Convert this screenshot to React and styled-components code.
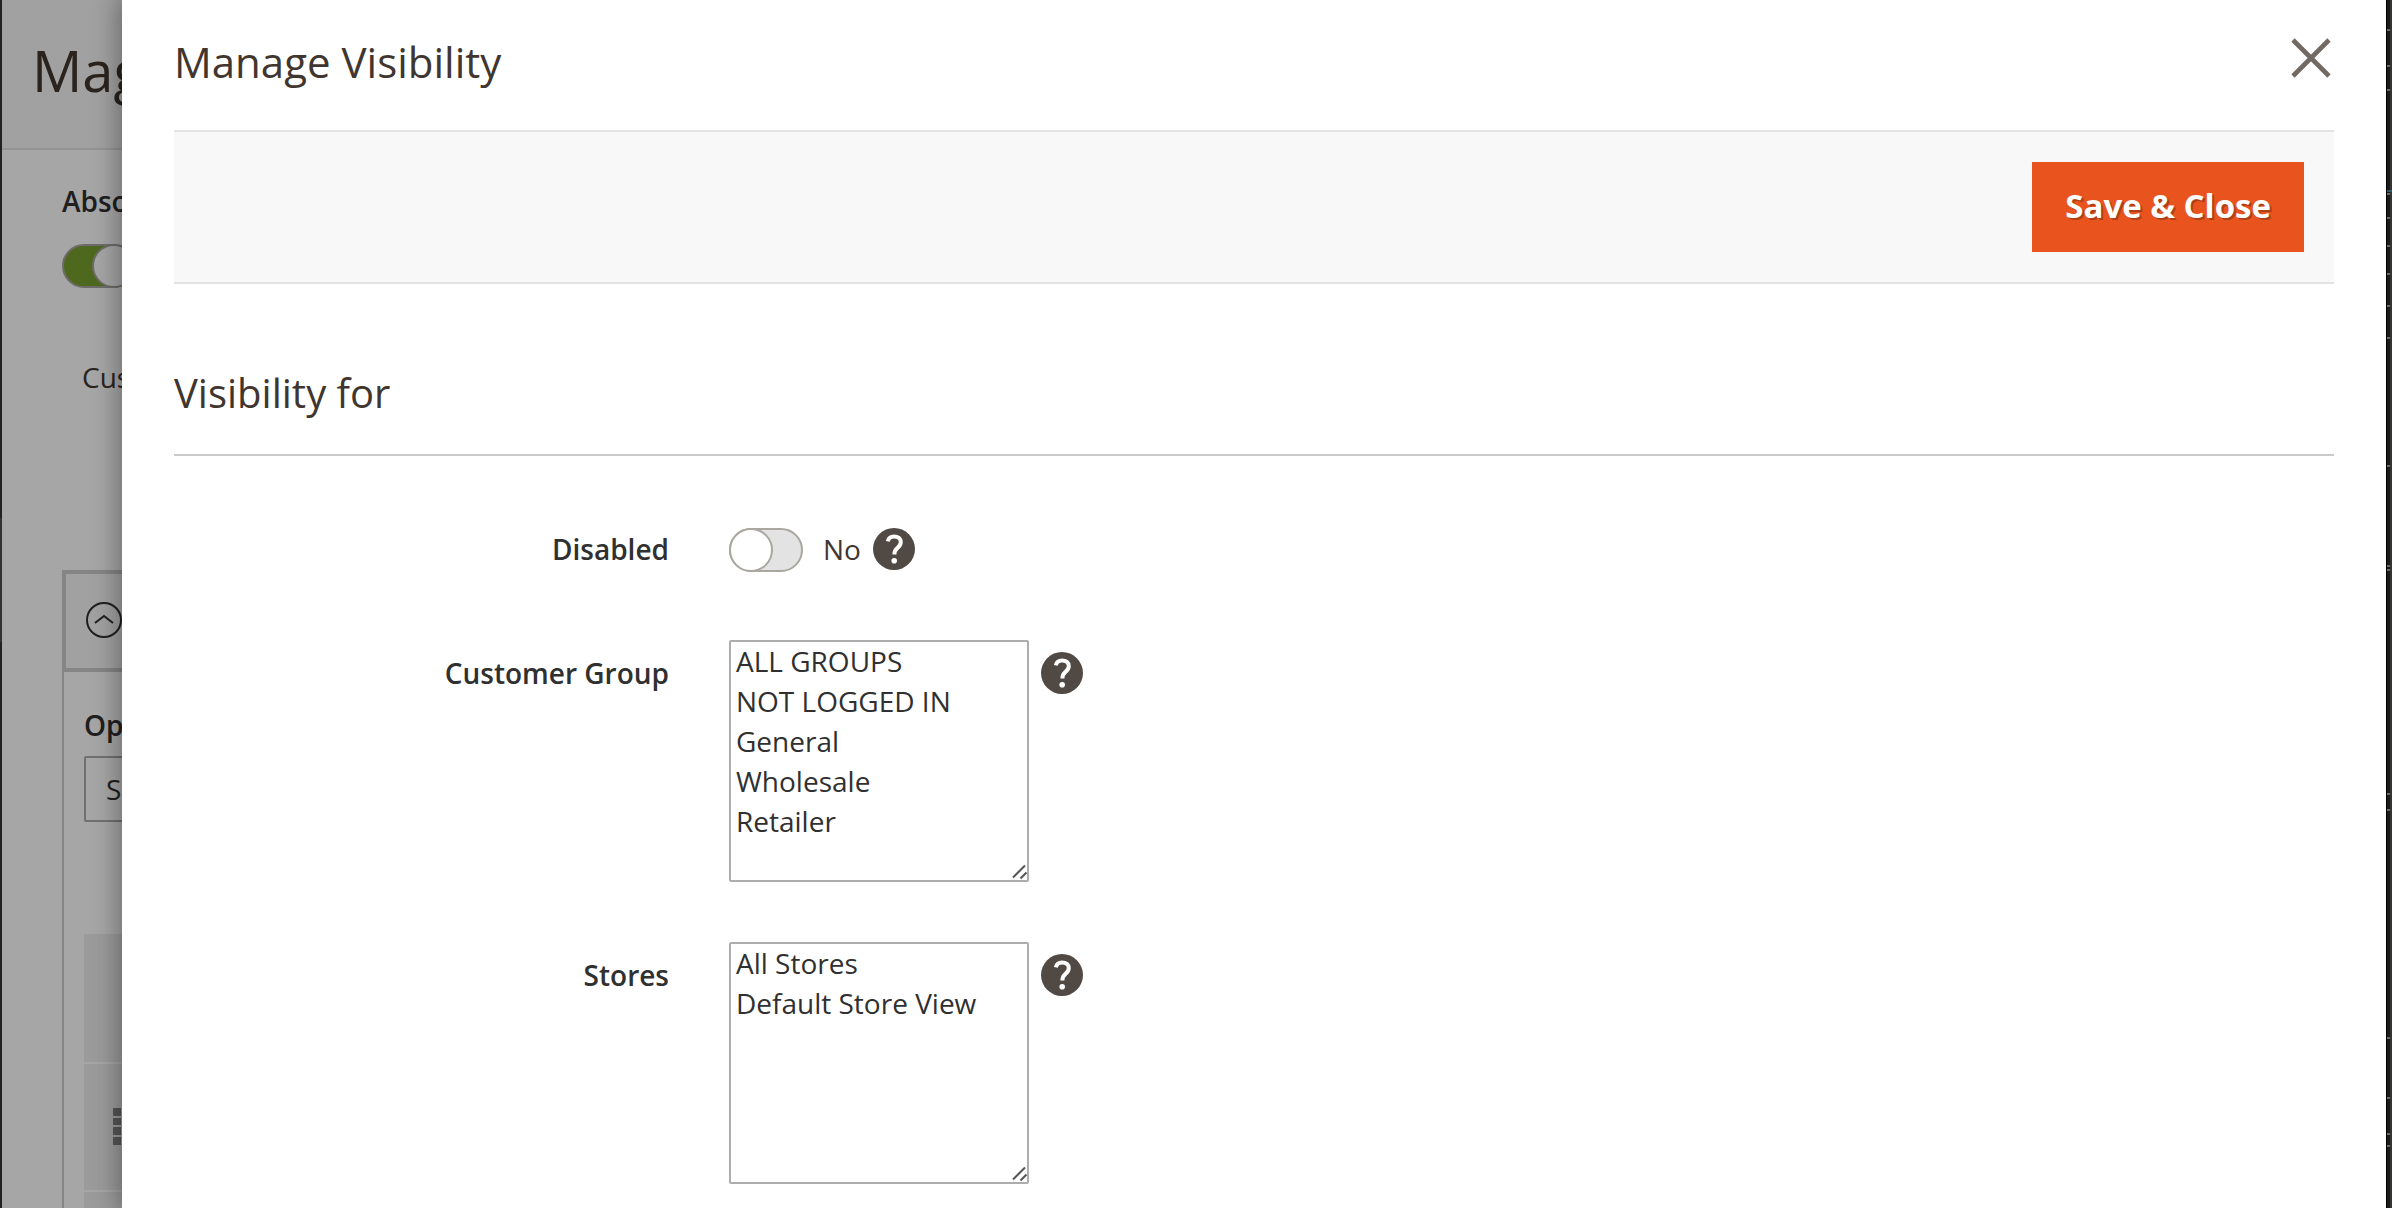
import { useState } from 'react';
import styled, { createGlobalStyle } from 'styled-components';

const customerGroups = ['ALL GROUPS', 'NOT LOGGED IN', 'General', 'Wholesale', 'Retailer'];
const stores = ['All Stores', 'Default Store View'];

const editorMarks = [30, 66, 90, 194, 218, 246, 274, 306, 338, 466, 566, 570, 794, 810, 1038, 1098, 1134, 1146];

function HelpButton({ topic }) {
  return (
    <Help type='button' aria-label={`Help: ${topic}`}>
      <svg viewBox='0 0 42 42' width='42' height='42' aria-hidden='true'>
        <circle cx='21' cy='21' r='21' fill='#514943' />
        <path
          d='M14.8 13.4c.6-3.3 3-5 6.3-5 3.8 0 6.7 2.1 6.7 5.7 0 2.6-1.3 4.2-3.3 5.8-2.1 1.7-3.1 2.8-3.1 6.6'
          fill='none'
          stroke='#fff'
          strokeWidth='4'
        />
        <circle cx='21.2' cy='32.7' r='2.8' fill='#fff' />
      </svg>
    </Help>
  );
}

function MultiSelectField({ id, label, options }) {
  return (
    <Field>
      <FieldLabel htmlFor={id} $offset>
        {label}
      </FieldLabel>
      <Control>
        <SelectWrap>
          <MultiSelect id={id} multiple size={5}>
            {options.map((option) => (
              <option key={option}>{option}</option>
            ))}
          </MultiSelect>
          <Grip viewBox='0 0 16 16' width='16' height='16' aria-hidden='true'>
            <path d='M1 13.5L13 1.5M8.5 14.5l6-6' fill='none' stroke='#555' strokeWidth='2' />
          </Grip>
        </SelectWrap>
        <HelpOffset>
          <HelpButton topic={label} />
        </HelpOffset>
      </Control>
    </Field>
  );
}

function PageBehind() {
  return (
    <Page>
      <PageHeader>
        <PageTitle>Mag</PageTitle>
      </PageHeader>
      <PageBody>
        <PageLabel htmlFor='absolute'>Abso</PageLabel>
        <PageSwitch>
          <Switch id='absolute' type='checkbox' defaultChecked />
        </PageSwitch>
        <PageText>Cus</PageText>
        <Panel>
          <PanelHeader>
            <svg viewBox='0 0 36 36' width='36' height='36' aria-hidden='true'>
              <circle cx='18' cy='18' r='17' fill='none' stroke='#303030' strokeWidth='2' />
              <path d='M9 21l9-7 9 7' fill='none' stroke='#303030' strokeWidth='2' />
            </svg>
          </PanelHeader>
          <PanelBody>
            <PageLabel htmlFor='option'>Op</PageLabel>
            <OptionSelect id='option'>
              <option>S</option>
            </OptionSelect>
            <Rows>
              <OptionRow />
              <OptionRow>
                <svg viewBox='0 0 18 38' width='18' height='38' aria-hidden='true'>
                  <path
                    d='M0 0h8v8H0zM0 10h8v7H0zM0 19h8v8H0zM0 29h8v8H0zM10 0h8v8h-8zM10 10h8v7h-8zM10 19h8v8h-8zM10 29h8v8h-8z'
                    fill='#858585'
                  />
                </svg>
              </OptionRow>
              <OptionRow />
            </Rows>
          </PanelBody>
        </Panel>
      </PageBody>
    </Page>
  );
}

export default function App() {
  const [disabled, setDisabled] = useState(false);

  return (
    <>
      <GlobalStyle />
      <Screen>
        <Admin>
          <Menu>
            <MenuItem />
          </Menu>
          <PageBehind />
          <Overlay />
          <Modal role='dialog' aria-labelledby='modal-title'>
            <ModalHeader>
              <ModalTitle id='modal-title'>Manage Visibility</ModalTitle>
              <Close type='button' aria-label='Close'>
                <svg viewBox='0 0 44 44' width='44' height='44' aria-hidden='true'>
                  <path d='M3 4L39 40M39 4L3 40' stroke='#736963' strokeWidth='4.6' />
                </svg>
              </Close>
            </ModalHeader>
            <Toolbar>
              <SaveButton type='button'>Save &amp; Close</SaveButton>
            </Toolbar>
            <SectionTitle>Visibility for</SectionTitle>
            <Form>
              <Field>
                <FieldLabel htmlFor='disabled'>Disabled</FieldLabel>
                <Control>
                  <Switch
                    id='disabled'
                    type='checkbox'
                    checked={disabled}
                    onChange={(e) => setDisabled(e.target.checked)}
                  />
                  <SwitchText>{disabled ? 'Yes' : 'No'}</SwitchText>
                  <HelpButton topic='Disabled' />
                </Control>
              </Field>
              <MultiSelectField id='customer-group' label='Customer Group' options={customerGroups} />
              <MultiSelectField id='stores' label='Stores' options={stores} />
            </Form>
          </Modal>
        </Admin>
        <EditorEdge>
          <svg width='6' height='1208' aria-hidden='true'>
            {editorMarks.map((y) => (
              <rect key={y} x='1' y={y - 1} width='3' height='2' fill='#6b6b66' />
            ))}
            <rect x='1' y='190' width='5' height='2' fill='#2c5c69' />
          </svg>
        </EditorEdge>
      </Screen>
    </>
  );
}

const GlobalStyle = createGlobalStyle`
  *, *::before {
    box-sizing: border-box;
  }
  body {
    margin: 0;
    color: #303030;
    font-family: 'Open Sans', 'Noto Sans', sans-serif;
    font-size: 28px;
    line-height: 42px;
  }
  button, input, select {
    margin: 0;
    color: inherit;
    font: inherit;
  }
  svg {
    display: block;
  }
`;
const Screen = styled.div`
  display: flex;
  height: 100vh;
  overflow: hidden;
`;
const Admin = styled.div`
  position: relative;
  display: flex;
  flex: 1;
  min-width: 0;
  overflow: hidden;
`;
const Menu = styled.nav`
  width: 2px;
  padding-top: 518px;
  background: #373330;
`;
const MenuItem = styled.div`
  height: 124px;
  background: #524d49;
`;
const Page = styled.div`
  flex: 1;
  background: #fff;
`;
const PageHeader = styled.header`
  height: 150px;
  padding: 32px 30px;
  background: #f8f8f8;
  border-bottom: 2px solid #e3e3e3;
`;
const PageTitle = styled.h1`
  margin: 0;
  color: #41362f;
  font-size: 56px;
  font-weight: 400;
  line-height: 76px;
`;
const PageBody = styled.main`
  padding: 30px 60px;
`;
const PageLabel = styled.label`
  display: block;
  font-weight: 600;
`;
const PageSwitch = styled.div`
  margin-top: 22px;
`;
const PageText = styled.p`
  margin: 68px 0 172px;
  padding-left: 20px;
  color: #41362f;
`;
const Switch = styled.input`
  appearance: none;
  display: flex;
  width: 74px;
  height: 44px;
  background: #e3e3e3;
  border: 2px solid #aaa6a0;
  border-radius: 22px;
  cursor: pointer;

  &::before {
    content: '';
    flex-shrink: 0;
    width: 44px;
    height: 44px;
    margin: -2px;
    background: #fff;
    border: 2px solid #aaa6a0;
    border-radius: 50%;
  }
  &:checked {
    background: #79a22e;
  }
  &:checked::before {
    margin-left: 28px;
  }
`;
const Panel = styled.section`
  border-left: 2px solid #ccc;
`;
const PanelHeader = styled.div`
  height: 102px;
  margin-left: -2px;
  padding: 28px 20px;
  background: #f8f8f8;
  border: 4px solid #ccc;
`;
const PanelBody = styled.div`
  padding: 32px 20px;
`;
const OptionSelect = styled.select`
  appearance: none;
  display: block;
  width: 300px;
  height: 66px;
  margin-top: 10px;
  padding: 0 20px;
  background: #fff;
  border: 2px solid #adadad;
  border-radius: 2px;
`;
const Rows = styled.div`
  display: flex;
  flex-direction: column;
  gap: 2px;
  margin-top: 112px;
`;
const OptionRow = styled.div`
  height: 126px;
  flex-shrink: 0;
  padding: 44px 29px;
  background: #efefef;

  &:first-child {
    height: 128px;
  }
`;
const Overlay = styled.div`
  position: absolute;
  inset: 0;
  background: rgba(0, 0, 0, 0.35);
`;
const Modal = styled.aside`
  position: absolute;
  top: 0;
  right: 0;
  bottom: 0;
  left: 122px;
  padding: 0 52px;
  background: #fff;
  box-shadow: 0 0 24px 4px rgba(0, 0, 0, 0.35);
`;
const ModalHeader = styled.header`
  display: flex;
  justify-content: space-between;
  align-items: flex-start;
  padding: 36px 0 42px;
`;
const ModalTitle = styled.h2`
  margin: 0;
  color: #41362f;
  font-size: 42px;
  font-weight: 400;
  line-height: 52px;
`;
const Close = styled.button`
  padding: 0;
  background: none;
  border: 0;
  cursor: pointer;
`;
const Toolbar = styled.div`
  display: flex;
  justify-content: flex-end;
  padding: 30px;
  background: #f8f8f8;
  border: solid #e3e3e3;
  border-width: 2px 0;
`;
const SaveButton = styled.button`
  height: 90px;
  padding: 0 33px 2px;
  color: #fff;
  font-size: 33px;
  font-weight: 700;
  background: #e9541e;
  border: 0;
  text-shadow: 2px 2px 0 rgba(0, 0, 0, 0.25);
  cursor: pointer;
`;
const SectionTitle = styled.h3`
  margin: 82px 0 72px;
  padding-bottom: 34px;
  color: #41362f;
  font-size: 40px;
  font-weight: 400;
  line-height: 54px;
  border-bottom: 2px solid #cacaca;
`;
const Form = styled.form`
  display: flex;
  flex-direction: column;
  gap: 60px;
`;
const Field = styled.div`
  display: grid;
  grid-template-columns: calc(25% - 45px) 1fr;
  column-gap: 60px;
  align-items: start;
  min-height: 52px;
`;
const FieldLabel = styled.label`
  padding-top: ${({ $offset }) => ($offset ? '12px' : '0')};
  font-weight: 600;
  text-align: right;
`;
const Control = styled.div`
  display: flex;
  align-items: flex-start;
`;
const SwitchText = styled.span`
  margin: 0 12px 0 20px;
  color: #41362f;
`;
const Help = styled.button`
  padding: 0;
  background: none;
  border: 0;
  cursor: pointer;
`;
const HelpOffset = styled.div`
  padding: 12px 0 0 12px;
`;
const SelectWrap = styled.div`
  position: relative;
  width: 300px;
`;
const MultiSelect = styled.select`
  display: block;
  width: 100%;
  height: 242px;
  padding: 0;
  overflow-y: auto;
  background: #fff;
  border: 2px solid #adadad;
  border-radius: 2px;

  option {
    height: 40px;
    padding: 0 5px;
    line-height: 40px;
  }
`;
const Grip = styled.svg`
  position: absolute;
  right: 1px;
  bottom: 2px;
`;
const EditorEdge = styled.div`
  width: 6px;
  background: #1b1c19;
  border-left: 1px solid #000;
  border-right: 2px solid #353633;

  svg {
    margin-left: -1px;
  }
`;
